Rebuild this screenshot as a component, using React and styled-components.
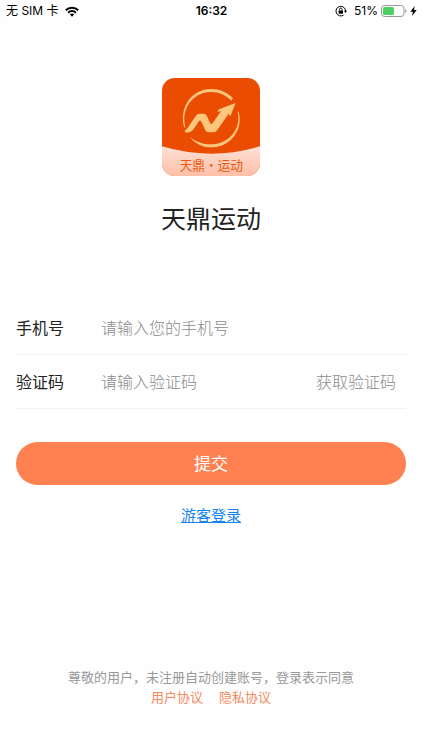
import React from 'react'
import styled, { createGlobalStyle } from 'styled-components'

const GlobalStyle = createGlobalStyle`
  * {
    box-sizing: border-box;
  }

  body {
    margin: 0;
    background-color: #fefefe;
    font-family: "Noto Sans CJK SC", sans-serif;
    color: #222;
  }

  button,
  input {
    font: inherit;
    border: 0;
    padding: 0;
    background: none;
  }
`

const Page = styled.div`
  display: flex;
  flex-direction: column;
  min-height: 100vh;
`

const StatusBar = styled.header`
  display: grid;
  grid-template-columns: 1fr auto 1fr;
  align-items: center;
  height: 22px;
  padding: 0 5px 0 6px;
  font-family: Inter, "Noto Sans CJK SC", sans-serif;
  font-size: 12px;
  line-height: 22px;
  color: #000;
`

const StatusGroup = styled.div`
  display: flex;
  align-items: center;
  justify-content: ${props => (props.$end ? 'flex-end' : 'flex-start')};
  gap: ${props => (props.$end ? '3px' : '6px')};

  svg {
    display: block;
  }
`

const Time = styled.time`
  font-weight: 600;
`

const Percent = styled.span`
  margin-left: 4px;
`

const Main = styled.main`
  display: flex;
  flex-direction: column;
  flex: 1;
  padding: 56px 16px 0;
`

const Brand = styled.div`
  display: flex;
  flex-direction: column;
  align-items: center;
  gap: 24px;

  svg {
    display: block;
  }
`

const Title = styled.h1`
  margin: 0;
  font-size: 25px;
  font-weight: 400;
  line-height: 34px;
`

const Form = styled.form`
  display: flex;
  flex-direction: column;
  margin-top: 67px;
`

const Field = styled.div`
  display: flex;
  align-items: center;
  height: 54px;
  padding: 0 10px 2px 0;
  border-bottom: 1px solid #f2f2f2;
  font-size: 16px;
  line-height: 24px;
`

const Label = styled.label`
  width: 85px;
  flex-shrink: 0;
`

const Input = styled.input`
  flex: 1;
  min-width: 0;
  height: 24px;
  outline: none;
  color: #222;

  &::placeholder {
    color: #8c8c8c;
    font-weight: 300;
    opacity: 1;
  }
`

const CodeButton = styled.button`
  color: #8c8c8c;
  font-weight: 300;
  cursor: pointer;
`

const Submit = styled.button`
  height: 43px;
  margin-top: 33px;
  padding-bottom: 2px;
  border-radius: 22px;
  background-color: #ff8050;
  color: #fff;
  font-size: 17px;
  line-height: 24px;
  cursor: pointer;
`

const GuestLink = styled.a`
  align-self: center;
  margin-top: 19px;
  color: #1482f0;
  font-size: 15px;
  line-height: 22px;
`

const Footer = styled.footer`
  padding: 0 16px 43px;
  color: #999;
  font-size: 13px;
  line-height: 20px;
  text-align: center;

  p {
    margin: 0;
  }
`

const Agreements = styled.nav`
  display: flex;
  justify-content: center;
  gap: 16px;

  a {
    color: #f58a5c;
    text-decoration: none;
  }
`

const WifiIcon = () => (
  <svg width="14" height="11" viewBox="0 0 14 11" aria-hidden="true">
    <g fill="none" stroke="#000" strokeWidth="2">
      <path d="M.8 4.2a8.8 8.8 0 0 1 12.4 0" />
      <path d="M3.1 6.7a5.5 5.5 0 0 1 7.8 0" />
    </g>
    <path d="M7 10.8 4.9 8.6a3 3 0 0 1 4.2 0z" />
  </svg>
)

const RotationLockIcon = () => (
  <svg width="12" height="12" viewBox="0 0 12 12" aria-hidden="true">
    <path d="M8.5 10.1A4.8 4.8 0 1 1 10.6 6" fill="none" stroke="#000" />
    <path d="M8.8 5.7h3.2l-1.6 2.2z" />
    <rect x="3.6" y="5.4" width="4.4" height="3.3" rx=".5" />
    <path d="M4.5 5.6V4.4a1.3 1.3 0 0 1 2.6 0v1.2" fill="none" stroke="#000" strokeWidth=".9" />
  </svg>
)

const BatteryIcon = () => (
  <svg width="26" height="12" viewBox="0 0 26 12" aria-hidden="true">
    <rect x=".5" y=".5" width="22.5" height="11" rx="3" fill="none" stroke="#999" />
    <rect x="2" y="2" width="11" height="8" rx="1.5" fill="#4cd264" />
    <path d="M24.2 4.2q1.4.5 1.4 1.8t-1.4 1.8z" fill="#999" />
  </svg>
)

const BoltIcon = () => (
  <svg width="7" height="10" viewBox="0 0 7 10" aria-hidden="true">
    <path d="M4.8 0 .3 5.7h2.6L2 10l4.7-5.9H4z" />
  </svg>
)

const Logo = () => (
  <svg width="98" height="98" viewBox="0 0 294 294" role="img" aria-label="天鼎·运动">
    <defs>
      <clipPath id="tile">
        <rect width="294" height="294" rx="38" />
      </clipPath>
      <linearGradient id="band" gradientUnits="userSpaceOnUse" x1="0" y1="205" x2="0" y2="294">
        <stop offset="0" stopColor="#fde0d5" />
        <stop offset="1" stopColor="#ffbfa8" />
      </linearGradient>
    </defs>
    <g clipPath="url(#tile)">
      <rect width="294" height="294" fill="#ea4d02" />
      <path d="M0 205q147 44 294 0v89H0z" fill="url(#band)" />
    </g>
    <g fill="#fdc67c">
      <path d="M67 149C50 90 88 33 147 33c26 0 49 10 66 28l-5 7c-16-17-37-26-61-26C91 42 56 95 70 147z" />
      <path d="M83 176c15 20 38 32 64 32 58 0 98-52 83-107l-3 1c12 52-28 97-80 97-25 0-47-9-64-23z" />
      <path d="M70 156Q73 155 77 150L101 114Q106 107 112 107H125Q131 107 134 113L146 138Q149 139 152 135L177 100L166 101L171 94L221 75L205 115L200 107L166 156Q161 163 154 163H140Q133 163 130 157L117 129Q114 126 111 129L93 156Q85 164 74 164Q65 163 70 156Z" />
    </g>
    <text
      x="148"
      y="275"
      textAnchor="middle"
      fill="#e8590f"
      fontFamily="'Noto Sans CJK SC', sans-serif"
      fontSize="38"
      fontWeight="400"
    >
      天鼎·运动
    </text>
  </svg>
)

const App = () => (
  <Page>
    <GlobalStyle />
    <StatusBar>
      <StatusGroup>
        <span>无 SIM 卡</span>
        <WifiIcon />
      </StatusGroup>
      <Time>16:32</Time>
      <StatusGroup $end>
        <RotationLockIcon />
        <Percent>51%</Percent>
        <BatteryIcon />
        <BoltIcon />
      </StatusGroup>
    </StatusBar>
    <Main>
      <Brand>
        <Logo />
        <Title>天鼎运动</Title>
      </Brand>
      <Form onSubmit={e => e.preventDefault()}>
        <Field>
          <Label htmlFor="phone">手机号</Label>
          <Input id="phone" type="tel" placeholder="请输入您的手机号" />
        </Field>
        <Field>
          <Label htmlFor="code">验证码</Label>
          <Input id="code" type="text" inputMode="numeric" placeholder="请输入验证码" />
          <CodeButton type="button">获取验证码</CodeButton>
        </Field>
        <Submit type="submit">提交</Submit>
      </Form>
      <GuestLink href="#guest">游客登录</GuestLink>
    </Main>
    <Footer>
      <p>尊敬的用户，未注册自动创建账号，登录表示同意</p>
      <Agreements>
        <a href="#terms">用户协议</a>
        <a href="#privacy">隐私协议</a>
      </Agreements>
    </Footer>
  </Page>
)

export default App
